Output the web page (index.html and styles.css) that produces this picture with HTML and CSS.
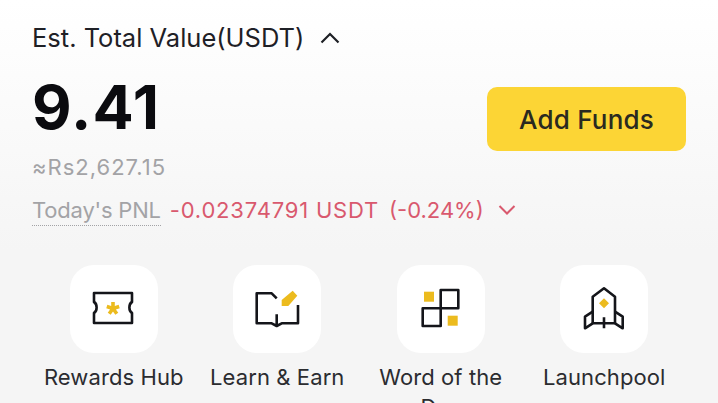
FILE: index.html
```html
<!DOCTYPE html>
<html>
<head>
  <meta charset="UTF-8">
  <meta name="viewport" content="width=device-width, initial-scale=1">
  <title>Assets</title>
  <link rel="stylesheet" href="styles.css">
</head>
<body>
<div class="page">
  <div class="title-row">
    <span class="title">Est. Total Value(USDT)</span>
    <svg class="caret-up" width="20" height="12" viewBox="0 0 20 12"><path d="M1.5 10.5 L10 2 L18.5 10.5" fill="none" stroke="#1e2026" stroke-width="2.2"/></svg>
  </div>

  <div class="balance-row">
    <div class="balance">9.41</div>
    <button type="button" class="add-funds">Add Funds</button>
  </div>

  <div class="fiat">≈Rs2,627.15</div>

  <div class="pnl-row">
    <span class="pnl-label">Today's PNL</span>
    <span class="pnl-value">-0.02374791 USDT</span>
    <span class="pnl-value pnl-pct">(-0.24%)</span>
    <svg class="caret-down" width="18" height="12" viewBox="0 0 18 12"><path d="M1.5 2 L9 9.5 L16.5 2" fill="none" stroke="#d9596e" stroke-width="2"/></svg>
  </div>

  <div class="shortcuts">
    <div class="shortcut">
      <div class="tile">
        <svg width="88" height="88" viewBox="0 0 88 88">
          <path class="line" d="M24 28 H62 V37 C58.5 39 58.5 46 62 48 V58 H24 V48 C27.5 46 27.5 39 24 37 Z"/>
          <path class="star" d="M43 37 V43.5 M43 43.5 L49.2 41.5 M43 43.5 L46.8 48.8 M43 43.5 L39.2 48.8 M43 43.5 L36.8 41.5"/>
        </svg>
      </div>
      <div class="shortcut-label">Rewards Hub</div>
    </div>
    <div class="shortcut">
      <div class="tile">
        <svg width="88" height="88" viewBox="0 0 88 88">
          <path class="line" d="M65 40 V58.3 H48.7 L43.7 61 L38.7 58.3 H23.7 V28.3 H38.7 L43.7 33.3 M43.7 49.3 V60"/>
          <path class="fill" d="M48.7 41 V35 L59.7 25.7 L64.3 30.7 L55.3 41 Z"/>
        </svg>
      </div>
      <div class="shortcut-label">Learn &amp; Earn</div>
    </div>
    <div class="shortcut">
      <div class="tile">
        <svg width="88" height="88" viewBox="0 0 88 88">
          <rect class="fill" x="27" y="26.7" width="10" height="10"/>
          <path class="line" d="M43.7 43.3 V25 H61.3 V43.3 H25.7 V61 H43.7 V43.3"/>
          <rect class="fill" x="50.7" y="50.7" width="10" height="10"/>
        </svg>
      </div>
      <div class="shortcut-label">Word of the Day</div>
    </div>
    <div class="shortcut">
      <div class="tile">
        <svg width="88" height="88" viewBox="0 0 88 88">
          <path class="line" d="M44 23.3 L55 31.7 V58.3 H32.7 V31.7 Z"/>
          <path class="line" d="M32.7 46.7 L25 51.7 V63.3 L32.7 58.3 M55 46.7 L62.7 51.7 V63.3 L55 58.3 M44 52.3 V63.3"/>
          <path class="fill" d="M44 33.3 L49 38.3 L44 43.3 L39 38.3 Z"/>
        </svg>
      </div>
      <div class="shortcut-label">Launchpool</div>
    </div>
  </div>
</div>
</body>
</html>
```

FILE: styles.css
```css
html, body {
  margin: 0;
  height: 403px;
  overflow: hidden;
}

body {
  background: linear-gradient(180deg, #fff 0, #f5f5f5 250px);
  font-family: "Inter", "Liberation Sans", sans-serif;
  color: #1e2026;
}

.page {
  padding: 21px 32px 0;
}

.title-row {
  display: flex;
  align-items: center;
  gap: 16px;
  height: 33px;
}

.title {
  font-size: 25.5px;
}

.balance-row {
  display: flex;
  justify-content: space-between;
  align-items: flex-start;
  margin-top: 16px;
}

.balance {
  font-size: 61px;
  font-weight: 700;
  letter-spacing: 1.2px;
  line-height: 75px;
  color: #0b0b0f;
}

.add-funds {
  width: 199px;
  height: 64px;
  margin-top: 17px;
  background-color: #fcd535;
  color: #2a2a20;
  border: none;
  border-radius: 10px;
  font-family: inherit;
  font-size: 26px;
  font-weight: 500;
  letter-spacing: 0.2px;
}

.fiat {
  margin-top: 2px;
  font-size: 22px;
  letter-spacing: 1px;
  line-height: 28px;
  color: #a3a3a6;
}

.pnl-row {
  display: flex;
  align-items: center;
  margin-top: 14px;
  height: 30px;
  font-size: 22px;
}

.pnl-label {
  color: #a3a3a6;
  border-bottom: 1px dotted #a3a3a6;
  padding: 2px 0;
  margin-right: 9px;
  letter-spacing: -0.2px;
}

.pnl-value {
  color: #d9596e;
  letter-spacing: 0.8px;
}

.pnl-pct {
  margin-left: 10px;
  letter-spacing: 0;
}

.caret-down {
  margin-left: 14px;
}

.shortcuts {
  display: grid;
  grid-template-columns: repeat(4, 1fr);
  margin-top: 40px;
}

.shortcut {
  display: flex;
  flex-direction: column;
  align-items: center;
}

.tile {
  display: flex;
  align-items: center;
  justify-content: center;
  width: 88px;
  height: 88px;
  background-color: #fff;
  border-radius: 24px;
}

.line {
  fill: none;
  stroke: #14151a;
  stroke-width: 2.6;
  stroke-linejoin: round;
}

.fill {
  fill: #ecbb1e;
}

.star {
  fill: none;
  stroke: #ecbb1e;
  stroke-width: 3.6;
}

.shortcut-label {
  margin-top: 9px;
  width: 150px;
  text-align: center;
  font-size: 22px;
  letter-spacing: 0.1px;
  line-height: 30px;
  color: #2b2c30;
}
```
